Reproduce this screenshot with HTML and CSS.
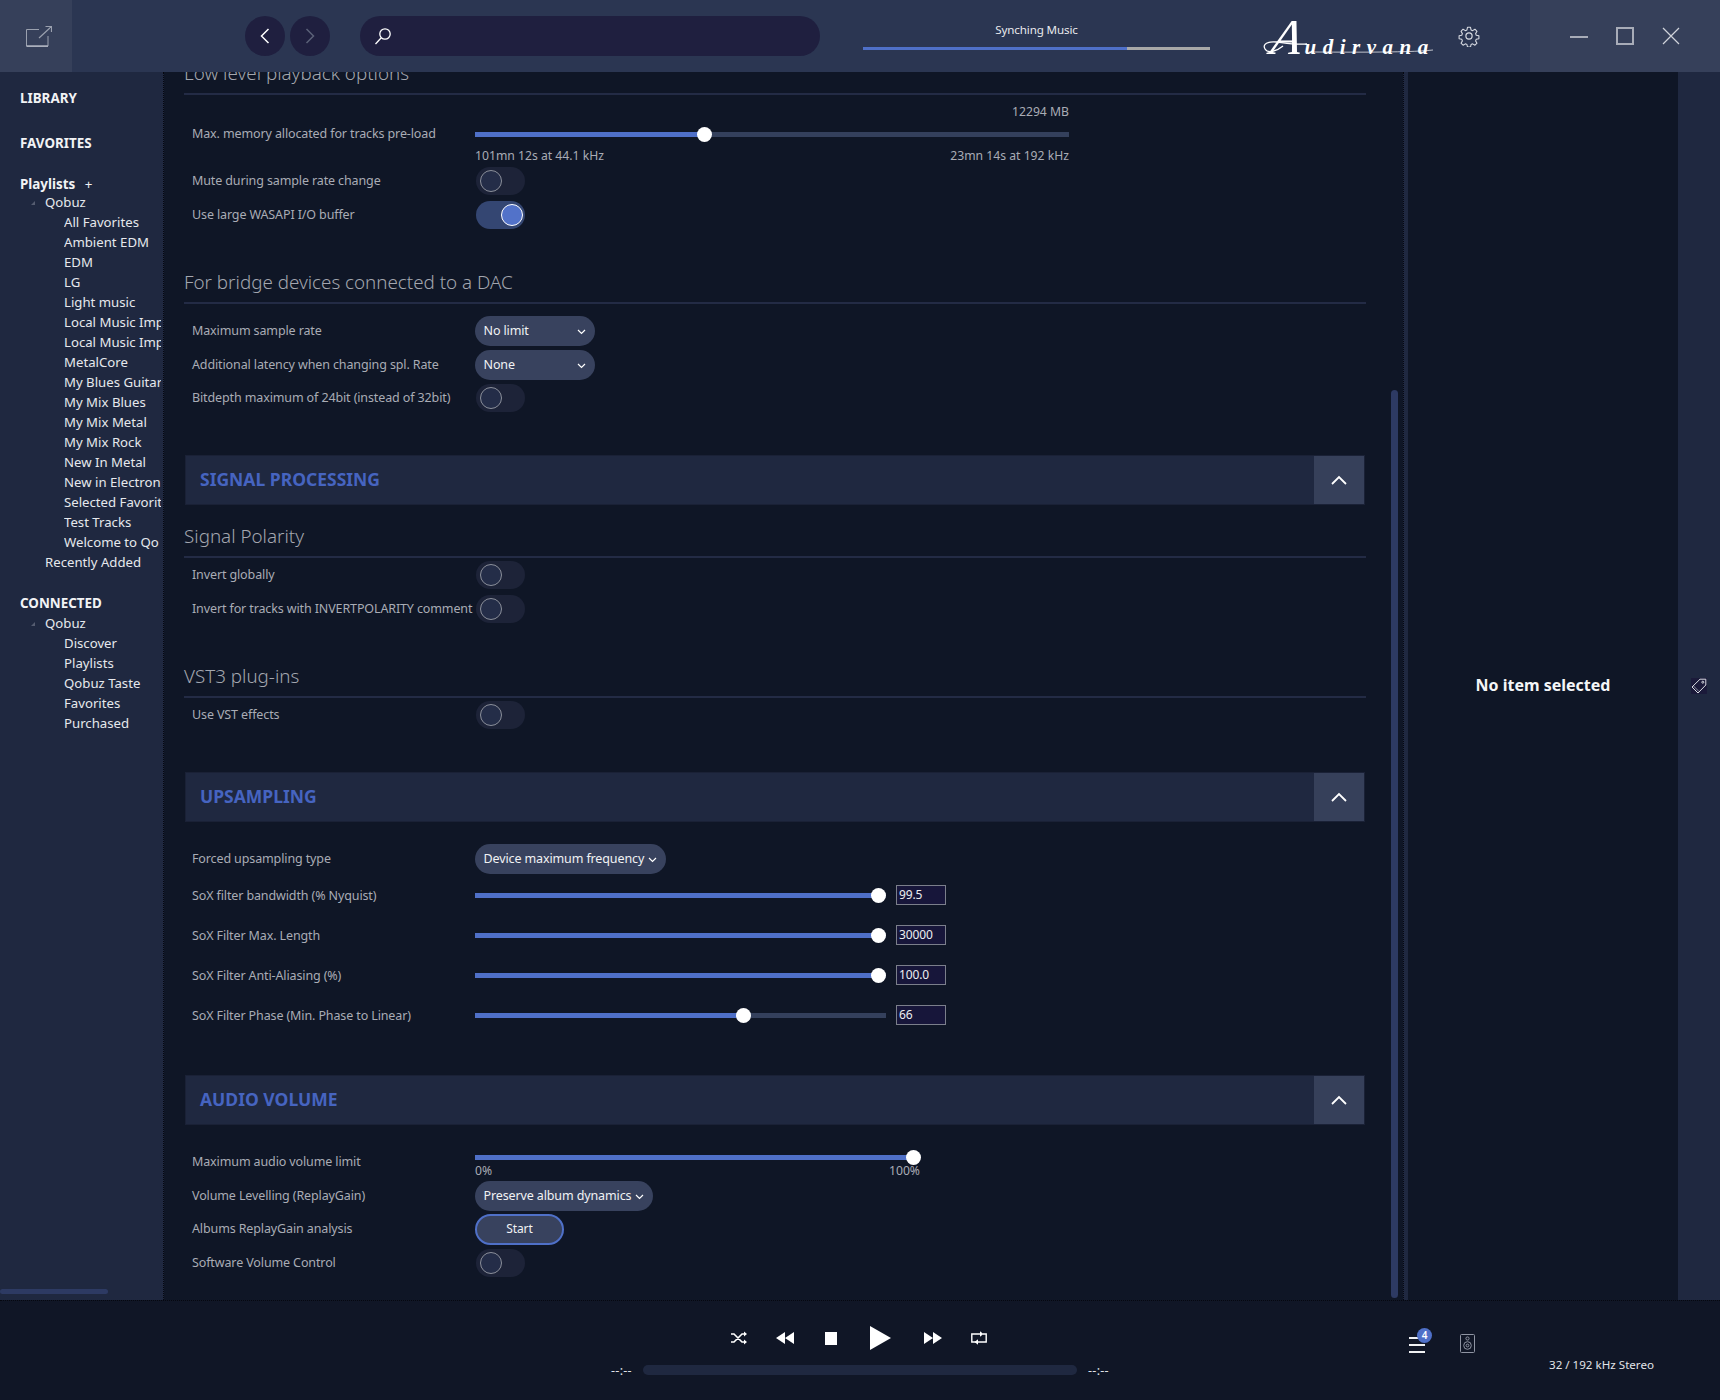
FILE: index.html
```html
<!DOCTYPE html>
<html lang="en">
<head>
<meta charset="utf-8">
<title>Audirvana</title>
<link rel="stylesheet" href="styles.css">
</head>
<body>
<div class="app">
  <header class="topbar">
    <div class="corner"><svg width="26" height="21" viewBox="0 0 26 21" fill="none" stroke="#9aa0ae" stroke-width="1"><path d="M13 3.5H.5V20H22V10"/><path d="M.5 20.2H22" stroke="#b4b8c4" stroke-width="1.4"/><path d="M13 12 25.5.5M19.5.5h6v5.5" stroke-width="1.2"/></svg></div>
    <div class="nav">
      <button class="round"><svg width="10" height="16" viewBox="0 0 10 16" fill="none" stroke="#fff" stroke-width="1.5"><path d="M8.5 1 1.5 8l7 7"/></svg></button>
      <button class="round"><svg width="10" height="16" viewBox="0 0 10 16" fill="none" stroke="#5b6178" stroke-width="1.5"><path d="M1.5 1l7 7-7 7"/></svg></button>
    </div>
    <div class="search"><svg width="18" height="18" viewBox="0 0 18 18" fill="none" stroke="#fff" stroke-width="1.3"><circle cx="11" cy="7" r="5.2"/><path d="M7.3 10.8 1.5 17"/></svg></div>
    <div class="sync">
      <div class="sync-text">Synching Music</div>
      <div class="sync-bar"><div class="sync-fill"></div></div>
    </div>
    <div class="logo">
      <svg class="swash" width="176" height="40" viewBox="0 0 176 40" fill="none" stroke="#fff" stroke-width="1.3"><path d="M20 30C14 35 5 38 2 33-1 28 5 25 14 26c8 1 18 3 30 2"/><path d="M46 36c20 0 100 1 124-2" stroke-width=".7"/></svg>
      <span class="logo-a">A</span><span class="logo-rest">udirvana</span>
    </div>
    <div class="gear"><svg width="22" height="22" viewBox="0 0 24 24" fill="none" stroke="#d8dbe2" stroke-width="1.3"><circle cx="12" cy="12" r="3.4"/><path d="M10.2 1.5h3.6l.7 3.2 1.9.8 2.8-1.7 2.5 2.5-1.7 2.8.8 1.9 3.2.7v3.6l-3.2.7-.8 1.9 1.7 2.8-2.5 2.5-2.8-1.7-1.9.8-.7 3.2h-3.6l-.7-3.2-1.9-.8-2.8 1.7-2.5-2.5 1.7-2.8-.8-1.9-3.2-.7v-3.6l3.2-.7.8-1.9-1.7-2.8 2.5-2.5 2.8 1.7 1.9-.8z" stroke-linejoin="round" transform="translate(1.2 1.2) scale(.9)"/></svg></div>
    <div class="winbox">
      <svg width="18" height="18" viewBox="0 0 18 18" fill="none" stroke="#a8acb8" stroke-width="2"><path d="M0 10h18"/></svg>
      <svg width="18" height="18" viewBox="0 0 18 18" fill="none" stroke="#a8acb8" stroke-width="2"><rect x="1" y="1" width="16" height="16"/></svg>
      <svg width="18" height="18" viewBox="0 0 18 18" fill="none" stroke="#d0d3da" stroke-width="1.2"><path d="M1 1l16 16M17 1 1 17"/></svg>
    </div>
  </header>

  <nav class="sidebar">
    <div class="nav-head first">LIBRARY</div>
    <div class="nav-head fav">FAVORITES</div>
    <div class="nav-head pl">Playlists <span class="plus">+</span></div>
    <div class="tree-root"><span class="tri"></span>Qobuz</div>
    <ul class="tree">
      <li>All Favorites</li><li>Ambient EDM</li><li>EDM</li><li>LG</li><li>Light music</li>
      <li>Local Music Imp</li><li>Local Music Imp</li><li>MetalCore</li><li>My Blues Guitar</li>
      <li>My Mix Blues</li><li>My Mix Metal</li><li>My Mix Rock</li><li>New In Metal</li>
      <li>New in Electron</li><li>Selected Favorit</li><li>Test Tracks</li><li>Welcome to Qo</li>
    </ul>
    <div class="tree-root plain">Recently Added</div>
    <div class="nav-head conn">CONNECTED</div>
    <div class="tree-root"><span class="tri"></span>Qobuz</div>
    <ul class="tree">
      <li>Discover</li><li>Playlists</li><li>Qobuz Taste</li><li>Favorites</li><li>Purchased</li>
    </ul>
    <div class="side-thumb"></div>
  </nav>

  <main class="main">
    <div class="scrollbar"><div class="scroll-thumb"></div></div>
    <div class="content">
      <h2 class="sub cut">Low level playback options</h2>
      <div class="row mem">
        <div class="label">Max. memory allocated for tracks pre-load</div>
        <div class="mem-box">
          <div class="cap right">12294 MB</div>
          <div class="slider mem-slider"><div class="fill" style="width:229px"></div><div class="thumb" style="left:229px"></div></div>
          <div class="cap split"><span>101mn 12s at 44.1 kHz</span><span>23mn 14s at 192 kHz</span></div>
        </div>
      </div>
      <div class="row tog"><div class="label">Mute during sample rate change</div><div class="toggle"><i></i></div></div>
      <div class="row tog gap6"><div class="label">Use large WASAPI I/O buffer</div><div class="toggle on"><i></i></div></div>

      <h2 class="sub bridge">For bridge devices connected to a DAC</h2>
      <div class="row dd gap12"><div class="label">Maximum sample rate</div><div class="select w120">No limit<svg class="chev" width="9" height="6" viewBox="0 0 9 6" fill="none" stroke="#fff" stroke-width="1.2"><path d="M1 1l3.5 3.5L8 1"/></svg></div></div>
      <div class="row dd gap4"><div class="label">Additional latency when changing spl. Rate</div><div class="select w120">None<svg class="chev" width="9" height="6" viewBox="0 0 9 6" fill="none" stroke="#fff" stroke-width="1.2"><path d="M1 1l3.5 3.5L8 1"/></svg></div></div>
      <div class="row tog gap4"><div class="label">Bitdepth maximum of 24bit (instead of 32bit)</div><div class="toggle"><i></i></div></div>

      <section class="band b1"><div class="band-title">SIGNAL PROCESSING</div><div class="band-btn"><svg width="16" height="10" viewBox="0 0 16 10" fill="none" stroke="#fff" stroke-width="1.8"><path d="M1 9l7-7 7 7"/></svg></div></section>
      <h2 class="sub pol">Signal Polarity</h2>
      <div class="row tog gap3"><div class="label">Invert globally</div><div class="toggle"><i></i></div></div>
      <div class="row tog gap6"><div class="label">Invert for tracks with INVERTPOLARITY comment</div><div class="toggle"><i></i></div></div>
      <h2 class="sub vst">VST3 plug-ins</h2>
      <div class="row tog gap3"><div class="label">Use VST effects</div><div class="toggle"><i></i></div></div>

      <section class="band b2"><div class="band-title">UPSAMPLING</div><div class="band-btn"><svg width="16" height="10" viewBox="0 0 16 10" fill="none" stroke="#fff" stroke-width="1.8"><path d="M1 9l7-7 7 7"/></svg></div></section>
      <div class="row dd gap22"><div class="label">Forced upsampling type</div><div class="select wauto">Device maximum frequency<svg class="chev" width="9" height="6" viewBox="0 0 9 6" fill="none" stroke="#fff" stroke-width="1.2"><path d="M1 1l3.5 3.5L8 1"/></svg></div></div>
      <div class="row sox first-sox"><div class="label">SoX filter bandwidth (% Nyquist)</div><div class="slider sox-slider"><div class="fill" style="width:403px"></div><div class="thumb" style="left:403px"></div></div><div class="num">99.5</div></div>
      <div class="row sox"><div class="label">SoX Filter Max. Length</div><div class="slider sox-slider"><div class="fill" style="width:403px"></div><div class="thumb" style="left:403px"></div></div><div class="num">30000</div></div>
      <div class="row sox"><div class="label">SoX Filter Anti-Aliasing (%)</div><div class="slider sox-slider"><div class="fill" style="width:403px"></div><div class="thumb" style="left:403px"></div></div><div class="num">100.0</div></div>
      <div class="row sox"><div class="label">SoX Filter Phase (Min. Phase to Linear)</div><div class="slider sox-slider"><div class="fill" style="width:268px"></div><div class="thumb" style="left:268px"></div></div><div class="num">66</div></div>

      <section class="band b3"><div class="band-title">AUDIO VOLUME</div><div class="band-btn"><svg width="16" height="10" viewBox="0 0 16 10" fill="none" stroke="#fff" stroke-width="1.8"><path d="M1 9l7-7 7 7"/></svg></div></section>
      <div class="row vol">
        <div class="label">Maximum audio volume limit</div>
        <div class="vol-box">
          <div class="slider vol-slider"><div class="fill" style="width:438px"></div><div class="thumb" style="left:438px"></div></div>
          <div class="cap split"><span>0%</span><span>100%</span></div>
        </div>
      </div>
      <div class="row dd"><div class="label">Volume Levelling (ReplayGain)</div><div class="select wauto">Preserve album dynamics<svg class="chev" width="9" height="6" viewBox="0 0 9 6" fill="none" stroke="#fff" stroke-width="1.2"><path d="M1 1l3.5 3.5L8 1"/></svg></div></div>
      <div class="row dd gap3"><div class="label">Albums ReplayGain analysis</div><button class="start">Start</button></div>
      <div class="row tog gap5"><div class="label">Software Volume Control</div><div class="toggle"><i></i></div></div>
    </div>
  </main>

  <div class="divider"></div>
  <aside class="detail"><div class="no-item">No item selected</div></aside>
  <aside class="rail"><div class="tag"><svg width="16" height="16" viewBox="0 0 16 16" fill="none" stroke="#d8dbe2" stroke-width="1"><path d="M9 1.2h5.8V7L7 15 1 9z"/><circle cx="11.8" cy="4.2" r="1"/><path d="M2.5 8 8 13.5" stroke-width=".6"/></svg></div></aside>

  <footer class="player">
    <div class="player-center">
      <div class="transport">
        <button class="tbtn"><svg width="16" height="14" viewBox="0 0 16 14" fill="none" stroke="#fff" stroke-width="1.6"><path d="M0 3h3l8 8h3M0 11h3l8-8h3"/><path d="M13 .5 16 3l-3 2.5zM13 8.5l3 2.5-3 2.5z" fill="#fff" stroke="none"/></svg></button>
        <button class="tbtn"><svg width="18" height="12" viewBox="0 0 18 12" fill="#fff"><path d="M9 0v12L0 6zM18 0v12L9 6z"/></svg></button>
        <button class="tbtn"><span class="stop"></span></button>
        <button class="tbtn play"><svg width="21" height="24" viewBox="0 0 21 24" fill="#fff"><path d="M0 0l21 12L0 24z"/></svg></button>
        <button class="tbtn next"><svg width="18" height="12" viewBox="0 0 18 12" fill="#fff"><path d="M0 0l9 6-9 6zM9 0l9 6-9 6z"/></svg></button>
        <button class="tbtn"><svg width="16" height="14" viewBox="0 0 16 14" fill="none" stroke="#fff" stroke-width="1.4"><path d="M9 3H.8v8H5M7 11h8.2V3H12"/><path d="M9 .2 12.5 3 9 5.8zM7 8.2 3.5 11 7 13.8z" fill="#fff" stroke="none"/></svg></button>
      </div>
      <div class="seek"><span class="time">--:--</span><div class="seekbar"></div><span class="time">--:--</span></div>
    </div>
    <div class="player-right">
      <div class="queue"><span></span><span></span><span></span><b class="badge">4</b></div>
      <svg class="speaker" width="15" height="19" viewBox="0 0 15 19" fill="none" stroke="#8f94a2" stroke-width="1"><rect x=".5" y=".5" width="14" height="18" rx="1"/><circle cx="7.5" cy="4.5" r="1.6"/><circle cx="7.5" cy="11.5" r="3.8"/><circle cx="7.5" cy="11.5" r="1.4"/></svg>
      <div class="format">32 / 192 kHz Stereo</div>
    </div>
  </footer>
</div>
</body>
</html>
```
FILE: styles.css
```css
* { box-sizing: border-box; }
html, body { margin: 0; height: 100%; }
body { background: #0f1626; color: #b4b7bf; font-family: "Noto Sans", "Open Sans", sans-serif; font-size: 12.5px; letter-spacing: -0.12px; overflow: hidden; }
button { font: inherit; letter-spacing: inherit; border: 0; padding: 0; background: none; color: inherit; }

.app { display: grid; width: 1720px; height: 1400px; grid-template-columns: 164px 1239px 5px 270px 42px; grid-template-rows: 72px 1228px 100px; }

.topbar { grid-column: 1 / -1; display: flex; align-items: center; background: #2b3652; position: relative; z-index: 2; }
.corner { width: 72px; height: 72px; background: #36405a; display: flex; align-items: center; justify-content: center; padding: 0 6px 0 12px; }
.nav { display: flex; gap: 5px; margin-left: 173px; }
.round { width: 40px; height: 40px; border-radius: 50%; background: #1f1f3f; display: flex; align-items: center; justify-content: center; }
.search { width: 460px; height: 40px; margin-left: 30px; border-radius: 20px; background: #1f1f3f; display: flex; align-items: center; padding-left: 14px; }
.sync { width: 347px; margin-left: 43px; height: 72px; }
.sync-text { color: #e8e9ec; font-size: 11.6px; text-align: center; margin-top: 21px; line-height: 18px; height: 26px; }
.sync-bar { height: 3px; background: #a8a8a8; }
.sync-fill { width: 264px; height: 3px; background: #4f70c8; }
.logo { position: relative; width: 176px; margin-left: 53px; height: 40px; color: #fff; font-family: "Liberation Serif", serif; font-style: italic; white-space: nowrap; display: flex; align-items: baseline; padding-left: 9px; letter-spacing: 0; }
.swash { position: absolute; left: 0; top: 0; }
.logo-a { font-size: 50px; line-height: 42px; display: inline-block; transform: skewX(-10deg); }
.logo-rest { font-size: 21px; font-weight: 700; letter-spacing: 6.5px; margin-left: 2px; }
.gear { margin-left: 19px; width: 22px; height: 22px; }
.winbox { margin-left: auto; width: 190px; height: 72px; background: #36405a; display: flex; align-items: center; padding-left: 40px; gap: 28px; }

.sidebar { background: #1f2840; position: relative; overflow: hidden; white-space: nowrap; color: #e6e8ed; padding-top: 16px; border-right: 1px dotted #05070f; font-size: 13.2px; letter-spacing: 0; }
.nav-head { font-weight: 700; color: #f2f3f5; padding-left: 20px; line-height: 20px; font-size: 13.4px; }
.nav-head.fav { margin-top: 25px; }
.nav-head.pl { margin-top: 21px; line-height: 20px; }
.nav-head.conn { margin-top: 21px; }
.plus { font-weight: 400; margin-left: 6px; }
.tree-root { padding-left: 45px; line-height: 20px; position: relative; margin-top: -2px; }
.tree-root.plain { margin-top: 0; }
.conn + .tree-root { margin-top: 0; }
.tri { position: absolute; left: 31px; top: 9px; width: 0; height: 0; border-left: 4px solid transparent; border-bottom: 4px solid #555c70; }
.tree { list-style: none; margin: 0; padding: 0 0 0 64px; overflow: hidden; width: 161px; }
.tree li { line-height: 20px; height: 20px; overflow: hidden; }
.side-thumb { position: absolute; left: 0; top: 1217px; width: 108px; height: 5px; border-radius: 3px; background: #2d3a63; }

.main { position: relative; overflow: hidden; }
.content { padding: 0 37px 0 20px; margin-top: -21px; }
.scrollbar { position: absolute; left: 1227px; top: 0; width: 7px; bottom: 0; }
.scroll-thumb { position: absolute; left: 0; top: 318px; bottom: 2px; width: 7px; border-radius: 4px; background: #2d3a63; }

.sub { margin: 0; height: 44px; line-height: 44px; font-size: 18.8px; font-weight: 300; letter-spacing: 0; color: #a3a6af; border-bottom: 2px solid #232b45; }
.sub.bridge { margin-top: 31px; }
.sub.pol { margin-top: 9px; }
.sub.vst { margin-top: 31px; }

.row { display: flex; align-items: center; padding-left: 8px; }
.label { width: 283px; flex: none; color: #a9acb5; white-space: nowrap; }
.tog { height: 28px; }
.dd { height: 30px; }
.tog .label, .dd .label { margin-top: -2px; }
.gap3 { margin-top: 3px; }
.gap4 { margin-top: 4px; }
.gap5 { margin-top: 5px; }
.gap6 { margin-top: 6px; }
.gap12 { margin-top: 12px; }
.gap22 { margin-top: 22px; }

.mem { height: 72px; margin-top: 0; align-items: flex-start; }
.mem .label { margin-top: 30px; }
.mem-box { width: 594px; padding-top: 6px; }
.cap { color: #a9acb5; font-size: 12.2px; letter-spacing: 0; line-height: 22px; height: 22px; }
.cap.right { text-align: right; }
.cap.split { display: flex; justify-content: space-between; }
.slider { position: relative; height: 5px; background: #34405c; }
.fill { height: 5px; background: #4f70c8; }
.thumb { position: absolute; top: -5px; margin-left: -7px; width: 15px; height: 15px; border-radius: 50%; background: #fff; }
.mem-slider { margin: 9px 0 8px; }

.toggle { position: relative; width: 49px; height: 28px; border-radius: 14px; background: #1d2338; margin-left: 1px; }
.toggle i { position: absolute; left: 4px; top: 3px; width: 22px; height: 22px; border-radius: 50%; border: 1.5px solid #8b8f9a; background: #242d48; }
.toggle.on { background: #344672; }
.toggle.on i { left: 25px; background: #5272c9; border-color: #fff; }

.select { height: 30px; border-radius: 15px; background: #38425e; color: #f1f2f4; display: flex; align-items: center; padding: 0 0 2px 8.5px; white-space: nowrap; }
.w120 { width: 120px; position: relative; }
.w120 .chev { position: absolute; right: 9px; top: 13px; }
.wauto { padding-right: 9px; gap: 4px; }
.wauto .chev { margin-top: 3px; }

.band { display: flex; height: 50px; margin: 0 1px; background: #1f2840; border: 1px solid #1a2136; }
.band.b1 { margin-top: 43px; }
.band.b2 { margin-top: 43px; }
.band.b3 { margin-top: 50px; }
.band-title { flex: 1; padding-left: 14px; line-height: 46px; font-size: 17.5px; letter-spacing: 0; font-weight: 700; color: #4664c0; }
.band-btn { width: 50px; background: #36405a; display: flex; align-items: center; justify-content: center; }

.sox { height: 20px; margin-top: 20px; }
.first-sox { margin-top: 11px; }
.sox-slider { width: 411px; }
.num { width: 50px; height: 20px; margin-left: 10px; border: 1px solid #7b7f8b; background: #17163a; color: #eceef1; font-size: 12px; line-height: 17px; padding-left: 2px; }

.vol { height: 31px; margin-top: 25px; align-items: flex-start; }
.vol .label { margin-top: 3px; }
.vol-box { width: 445px; padding-top: 5px; }
.vol-slider { margin-bottom: 2px; }
.vol .cap { line-height: 18px; height: 18px; }

.start { width: 89px; height: 31px; border-radius: 16px; background: #38425e; border: 2px solid #4f70c8; color: #f1f2f4; font-size: 12px; padding-bottom: 2px; }

.divider { background: #1f2840; border-left: 1px dotted #05070f; }
.detail { background: #0f1626; display: flex; align-items: center; justify-content: center; }
.no-item { color: #f4f5f7; font-size: 16px; letter-spacing: 0; font-weight: 700; margin-top: -3px; }
.rail { background: #1f2840; display: flex; align-items: center; justify-content: center; }
.tag { width: 16px; height: 16px; background: #1b1a3a; }

.player { grid-column: 1 / -1; display: flex; background: #101626; border-top: 1px dotted #05070f; }
.player-center { width: 1400px; padding-left: 611px; }
.transport { display: flex; align-items: center; height: 24px; margin: 25px 0 0 105px; }
.tbtn { width: 46px; height: 24px; display: flex; align-items: center; justify-content: center; }
.tbtn.play { width: 53px; }
.tbtn.next { margin-left: 3px; }
.stop { width: 12px; height: 13px; background: #fff; }
.seek { display: flex; align-items: center; margin-top: 15px; height: 10px; }
.time { color: #dfe1e6; font-size: 12.5px; letter-spacing: .3px; width: 32px; }
.seekbar { width: 434px; height: 10px; border-radius: 5px; background: #1f2840; margin-right: 11px; }

.player-right { position: relative; flex: 1; display: flex; align-items: flex-start; padding: 33px 0 0 9px; }
.queue { position: relative; width: 16px; height: 16px; margin-top: 3px; display: flex; flex-direction: column; justify-content: space-between; }
.queue span { height: 2px; background: #f0f1f3; }
.badge { position: absolute; left: 8px; top: -9px; width: 15px; height: 15px; border-radius: 50%; background: #4f70c8; color: #fff; font-size: 10px; font-weight: 600; line-height: 15px; text-align: center; }
.speaker { margin-left: 35px; }
.format { color: #e2e4e8; font-size: 11.6px; letter-spacing: 0; margin: 23px 0 0 74px; white-space: nowrap; line-height: 16px; }
```
